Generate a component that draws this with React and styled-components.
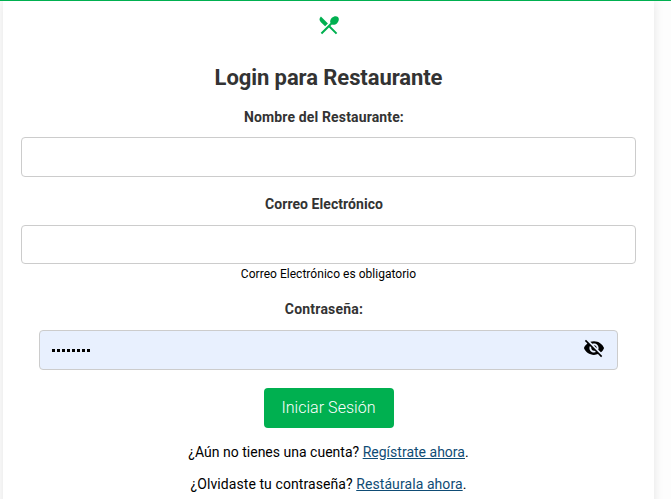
import React, { useState } from "react";
import styled, { createGlobalStyle } from "styled-components";
import { MdRestaurantMenu, MdVisibilityOff, MdVisibility } from "react-icons/md";

const GlobalStyle = createGlobalStyle`
  *, *::before, *::after { box-sizing: border-box; }
  body {
    margin: 0;
    background: #fdfdfd;
    font-family: Roboto, "Liberation Sans", sans-serif;
    color: #000;
    overflow: hidden;
  }
`;

const Page = styled.main`
  height: 499px;
  padding: 0 17px 0 3px;
  border-top: 1px solid #00b050;
  overflow: hidden;
`;

const Card = styled.form`
  display: flex;
  flex-direction: column;
  align-items: center;
  height: 520px;
  padding: 12px 18px 0;
  background: #fff;
  box-shadow: 0 0 10px rgba(0, 0, 0, 0.1);
`;

const Logo = styled(MdRestaurantMenu)`
  flex: none;
  color: #00b050;
`;

const Title = styled.h1`
  margin: 27px 0 0;
  font-size: 22px;
  font-weight: 700;
  line-height: 28px;
  letter-spacing: -0.08px;
  color: #333;
`;

const Label = styled.label`
  margin-top: ${(p) => p.$gap};
  margin-right: 9px;
  font-size: 14px;
  font-weight: 700;
  line-height: 20px;
  letter-spacing: ${(p) => p.$spacing || "0"};
  color: #333;
`;

const Input = styled.input`
  flex: none;
  width: 100%;
  height: ${(p) => p.$height || "40px"};
  margin-top: ${(p) => p.$gap || "10px"};
  padding: 0 11px;
  border: 1px solid #ccc;
  border-radius: 4px;
  background: #fff;
  outline: none;
`;

const ErrorText = styled.p`
  margin: 2px 0 0;
  font-size: 12px;
  line-height: 16px;
  letter-spacing: 0.03px;
`;

const PasswordBox = styled.div`
  flex: none;
  display: flex;
  align-items: center;
  justify-content: space-between;
  width: 579px;
  height: 40px;
  margin-top: 11px;
  padding: 0 12px 0 11px;
  border: 1px solid #ccc;
  border-radius: 4px;
  background: #e8f0fe;
`;

const Dots = styled.div`
  display: flex;
  gap: 2px;
  padding-left: 1px;
`;

const Dot = styled.span`
  width: 3px;
  height: 3px;
  background: #000;
`;

const Toggle = styled.button`
  display: flex;
  padding: 0;
  margin-top: -4px;
  border: 0;
  background: none;
  color: #000;
`;

const Submit = styled.button`
  flex: none;
  width: 130px;
  height: 40px;
  margin: 18px 0 5px;
  padding: 0 0 2px;
  border: 0;
  border-radius: 4px;
  background: #00b050;
  color: #fff;
  font: 300 16px Roboto, sans-serif;
  letter-spacing: 0.04px;
`;

const Prompt = styled.p`
  margin: 9px 0 0;
  font-size: 14px;
  line-height: 20px;
  letter-spacing: ${(p) => p.$spacing};
  & + & { margin-top: 12px; }
`;

const Link = styled.a`
  color: #0f4c75;
  text-decoration: underline;
`;

export default function App() {
  const [visible, setVisible] = useState(false);
  const Eye = visible ? MdVisibility : MdVisibilityOff;
  return (
    <>
      <GlobalStyle />
      <Page>
        <Card>
          <Logo size={24} />
          <Title>Login para Restaurante</Title>
          <Label $gap="15px" $spacing="0.14px" htmlFor="name">Nombre del Restaurante:</Label>
          <Input id="name" />
          <Label $gap="17px" $spacing="0.06px" htmlFor="email">Correo Electrónico</Label>
          <Input id="email" $height="39px" $gap="11px" />
          <ErrorText>Correo Electrónico es obligatorio</ErrorText>
          <Label $gap="17px" $spacing="0.2px">Contraseña:</Label>
          <PasswordBox>
            <Dots>
              {Array.from({ length: 8 }, (_, i) => <Dot key={i} />)}
            </Dots>
            <Toggle type="button" onClick={() => setVisible(!visible)}>
              <Eye size={22} />
            </Toggle>
          </PasswordBox>
          <Submit type="button">Iniciar Sesión</Submit>
          <Prompt $spacing="0.01px">¿Aún no tienes una cuenta? <Link href="#">Regístrate ahora</Link>.</Prompt>
          <Prompt $spacing="0.08px">¿Olvidaste tu contraseña? <Link href="#">Restáurala ahora</Link>.</Prompt>
        </Card>
      </Page>
    </>
  );
}
